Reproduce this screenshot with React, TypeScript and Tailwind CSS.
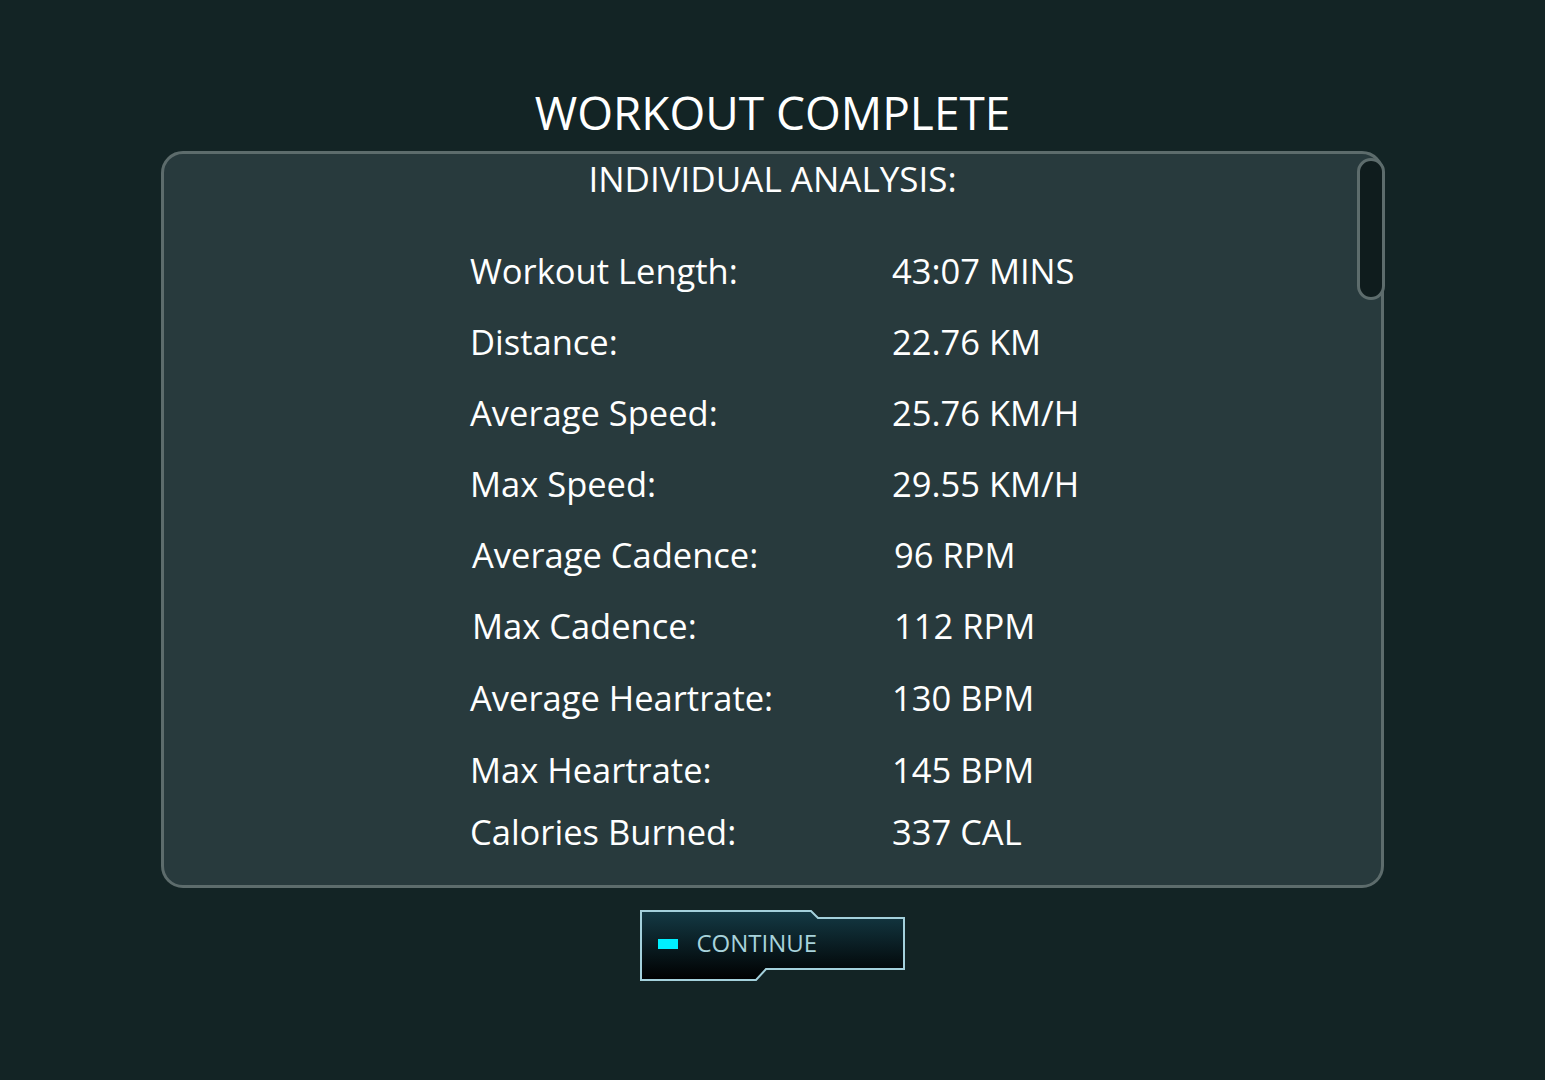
import React from "react";

const rows: { label: string; value: string; cls: string }[] = [
  { label: "Workout Length:", value: "43:07 MINS", cls: "h-[71px]" },
  { label: "Distance:", value: "22.76 KM", cls: "h-[71px]" },
  { label: "Average Speed:", value: "25.76 KM/H", cls: "h-[71px]" },
  { label: "Max Speed:", value: "29.55 KM/H", cls: "h-[71px]" },
  { label: "Average Cadence:", value: "96 RPM", cls: "h-[71px] pl-[2px]" },
  { label: "Max Cadence:", value: "112 RPM", cls: "h-[72px] pl-[2px]" },
  { label: "Average Heartrate:", value: "130 BPM", cls: "h-[72px]" },
  { label: "Max Heartrate:", value: "145 BPM", cls: "h-[62px]" },
  { label: "Calories Burned:", value: "337 CAL", cls: "h-[58px]" },
];

export default function App() {
  return (
    <div
      className="w-full h-screen bg-[#132425] flex flex-col items-center text-white"
      style={{ fontFamily: '"Open Sans", "Noto Sans", sans-serif' }}
    >
      <h1 className="mt-[84px] h-[56px] leading-[56px] text-[46px] mb-[11px]">
        WORKOUT COMPLETE
      </h1>
      <div className="relative w-[1223px] h-[737px] rounded-[22px] border-[3px] border-[#5d6c6c] bg-[#283a3d]">
        <div className="pt-[5px] h-[45px] leading-[40px] text-center text-[35px]">
          INDIVIDUAL ANALYSIS:
        </div>
        <div className="mt-[36px] pl-[306px] flex flex-col">
          {rows.map((r) => (
            <div
              key={r.label}
              className={`${r.cls} grid grid-cols-[422px_auto] items-start text-[34.5px] leading-[71px]`}
            >
              <div>{r.label}</div>
              <div>{r.value}</div>
            </div>
          ))}
        </div>
        <div className="absolute right-[-4px] top-[4px] w-[28px] h-[142px] rounded-full border-[3px] border-[#5d6c6c] bg-[#0f1c1d]" />
      </div>
      <button className="relative mt-[22px] w-[266px] h-[71px]">
        <svg className="absolute inset-0" width="266" height="71" viewBox="0 0 266 71">
          <defs>
            <linearGradient id="btnGrad" x1="0" y1="0" x2="0" y2="1">
              <stop offset="0" stopColor="#143a45" />
              <stop offset="1" stopColor="#000000" />
            </linearGradient>
          </defs>
          <path
            d="M1 1 L171 1 L178 8 L264 8 L264 59 L126 59 L116 70 L1 70 Z"
            fill="url(#btnGrad)"
            stroke="#a4d1dc"
            strokeWidth="2"
          />
        </svg>
        <div className="relative flex items-center h-full pl-[18px] pb-[6px]">
          <span className="w-[20px] h-[10px] mt-[2px] bg-[#00f0ff]" />
          <span className="ml-[19px] text-[24px] text-[#a8d3db]">CONTINUE</span>
        </div>
      </button>
    </div>
  );
}
